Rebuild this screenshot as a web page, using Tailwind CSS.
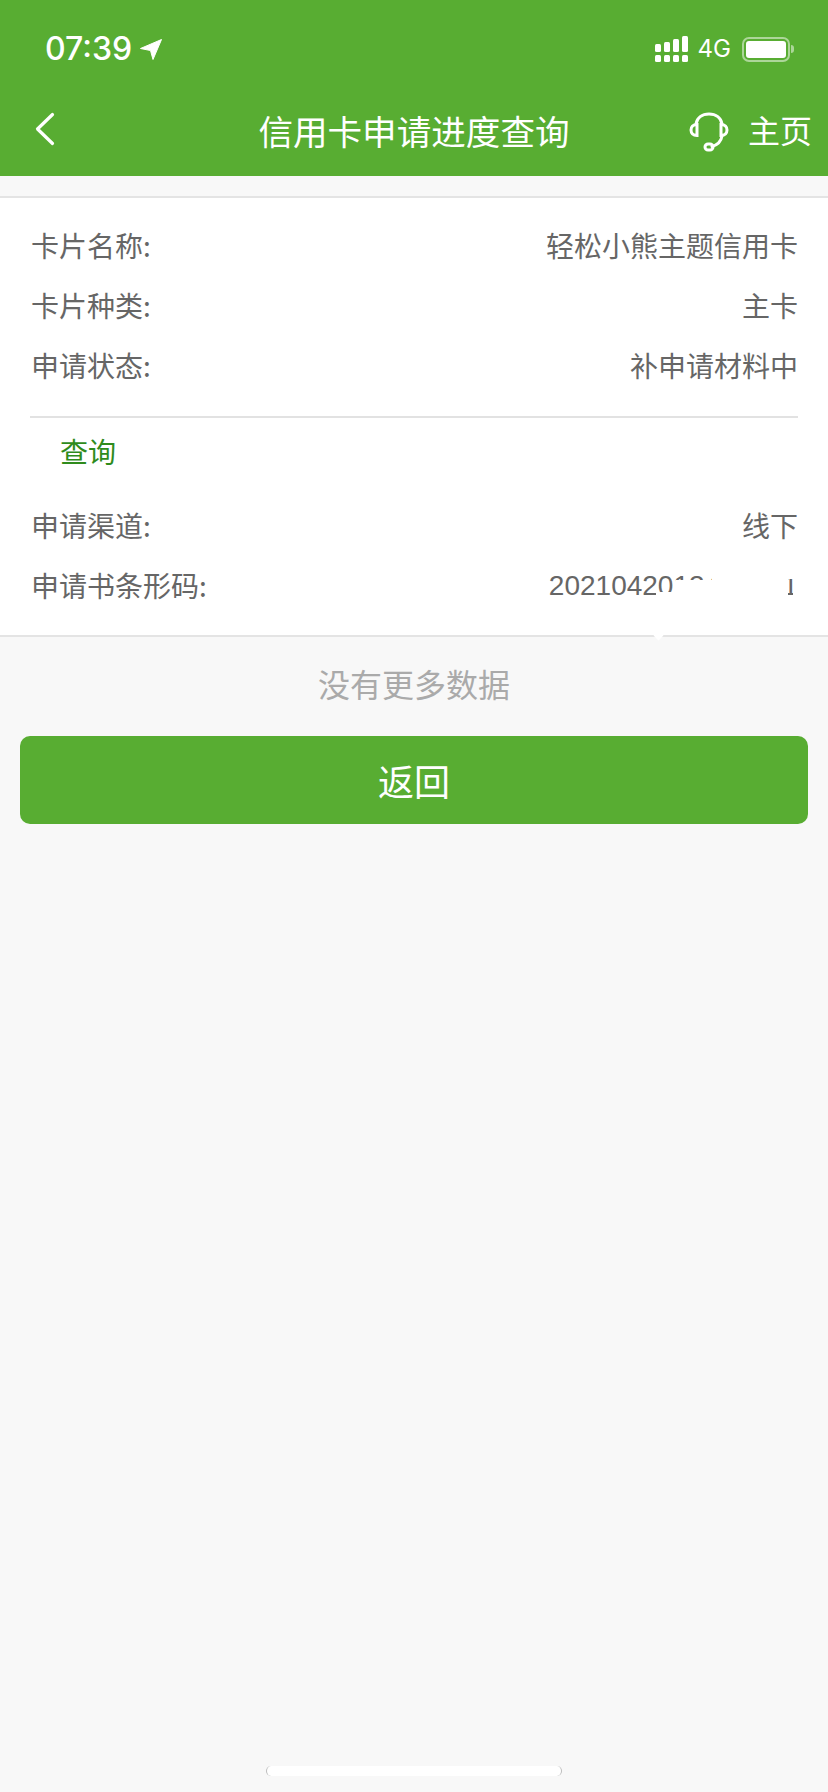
<!DOCTYPE html>
<html lang="zh">
<head>
<meta charset="utf-8">
<script src="https://cdn.jsdelivr.net/npm/@tailwindcss/browser@4"></script>
</head>
<body class="m-0 bg-[#f8f8f8] font-['Noto_Sans_CJK_SC','Liberation_Sans',sans-serif]">
<div class="w-[828px] h-[1792px] relative overflow-hidden flex flex-col bg-[#f8f8f8]">
  <header class="bg-[#58ad32] h-[176px] text-white shrink-0">
    <div class="h-[88px] flex items-center justify-between pl-[45px] pr-[34px] pt-[10px]">
      <div class="flex items-center gap-[8px]">
        <span class="text-[32px] leading-none font-medium font-['Inter','Liberation_Sans',sans-serif]">07:39</span>
        <svg width="22" height="21" viewBox="0 0 22 21"><path d="M0.5 9.5 21.500 0.500 13 20.500 10.500 11.500Z" fill="#fff" stroke="#fff" stroke-linejoin="round"/></svg>
      </div>
      <div class="flex items-center gap-[10px]">
        <svg width="33" height="26" viewBox="0 0 33 26" fill="#fff">
          <rect x="0" y="8" width="6" height="8" rx="1.500"/><rect x="0" y="19" width="6" height="7" rx="1.500"/>
          <rect x="9" y="6" width="6" height="10" rx="1.500"/><rect x="9" y="19" width="6" height="7" rx="1.500"/>
          <rect x="18" y="3" width="6" height="13" rx="1.500"/><rect x="18" y="19" width="6" height="7" rx="1.500"/>
          <rect x="27" y="0" width="6" height="16" rx="1.500"/><rect x="27" y="19" width="6" height="7" rx="1.500"/>
        </svg>
        <span class="text-[24px] leading-none font-['Inter','Liberation_Sans',sans-serif]">4G</span>
        <div class="flex items-center ml-[1px]">
          <div class="w-[48px] h-[25px] rounded-[7px] border-2 border-white/50 p-[2px] flex">
            <div class="flex-1 bg-white rounded-[3px]"></div>
          </div>
          <div class="w-[3px] h-[8px] bg-white/50 rounded-r-full ml-[1px]"></div>
        </div>
      </div>
    </div>
    <nav class="h-[88px] relative flex items-center justify-center">
      <svg class="absolute left-[34px] top-[24px]" width="22" height="34" viewBox="0 0 22 34" fill="none" stroke="#fff" stroke-width="3.200" stroke-linecap="round" stroke-linejoin="round"><path d="M18.500 2.500 3.500 17 18.500 31.500"/></svg>
      <h1 class="text-[34.6px] leading-none font-normal mt-[-4px]">信用卡申请进度查询</h1>
      <div class="absolute right-[16px] top-[24px] flex items-center gap-[19px]">
        <svg width="40" height="40" viewBox="0 0 40 40" fill="none" stroke="#fff" stroke-width="3" stroke-linecap="round">
          <path d="M7 12C8 6 13 2 20 2S32 6 33 12"/>
          <path d="M8 12.500C4 12.500 2 15 2 18S4 23.500 8 23.500Z"/>
          <path d="M32 12.500C36 12.500 38 15 38 18S36 23.500 32 23.500Z"/>
          <path d="M33 24C32 30 28 33 23 34.500"/>
          <rect x="16" y="32" width="8" height="6" rx="3"/>
        </svg>
        <span class="text-[32px] leading-none mt-[-6px]">主页</span>
      </div>
    </nav>
  </header>

  <main class="mt-[20px] bg-white border-t-2 border-b-2 border-[#e4e4e4] text-[28px] leading-none text-[#666] relative shrink-0 h-[441px] pt-[17px]">
    <div class="pl-[31px] pr-[30px] h-[60px] flex items-center justify-between"><span>卡片名称:</span><span>轻松小熊主题信用卡</span></div>
    <div class="pl-[31px] pr-[30px] h-[60px] flex items-center justify-between"><span>卡片种类:</span><span>主卡</span></div>
    <div class="pl-[31px] pr-[30px] h-[60px] flex items-center justify-between"><span>申请状态:</span><span>补申请材料中</span></div>
    <div class="mx-[30px] mt-[21px] border-t-2 border-[#e2e2e2]"></div>
    <div class="pl-[60px] h-[66px] flex items-center text-[#2f8b1c]">查询</div>
    <div class="pl-[31px] pr-[30px] h-[60px] mt-[11px] flex items-center justify-between"><span>申请渠道:</span><span>线下</span></div>
    <div class="pl-[31px] pr-[30px] h-[60px] flex items-center justify-between"><span>申请书条形码:</span><span class="font-['Liberation_Sans',sans-serif] mt-[2px]">2021042013456781</span></div>
    <div class="absolute left-[656px] top-[394px] w-[132px] h-[42px] bg-white"></div>
    <div class="absolute left-[676px] top-[382px] w-[112px] h-[14px] bg-white"></div>
    <div class="absolute left-[712px] top-[362px] w-[90px] h-[19px] bg-white"></div>
    <div class="absolute left-[712px] top-[380px] w-[76px] h-[4px] bg-white"></div>
    <div class="absolute left-[793px] top-[375px] w-[7px] h-[26px] bg-white"></div>
    <div class="absolute left-[655px] top-[434px] w-[7px] h-[7px] bg-white rotate-45"></div>
  </main>

  <p class="mt-[22px] text-center text-[32px] leading-[48px] text-[#aaa]">没有更多数据</p>
  <button class="mt-[29px] mx-[20px] h-[88px] rounded-[10px] bg-[#58ad32] text-white text-[36px] leading-none">返回</button>

  <div class="absolute left-[266px] top-[1766px] w-[296px] h-[10px] rounded-full bg-white border-x border-[#bbb]"></div>
</div>
</body>
</html>
